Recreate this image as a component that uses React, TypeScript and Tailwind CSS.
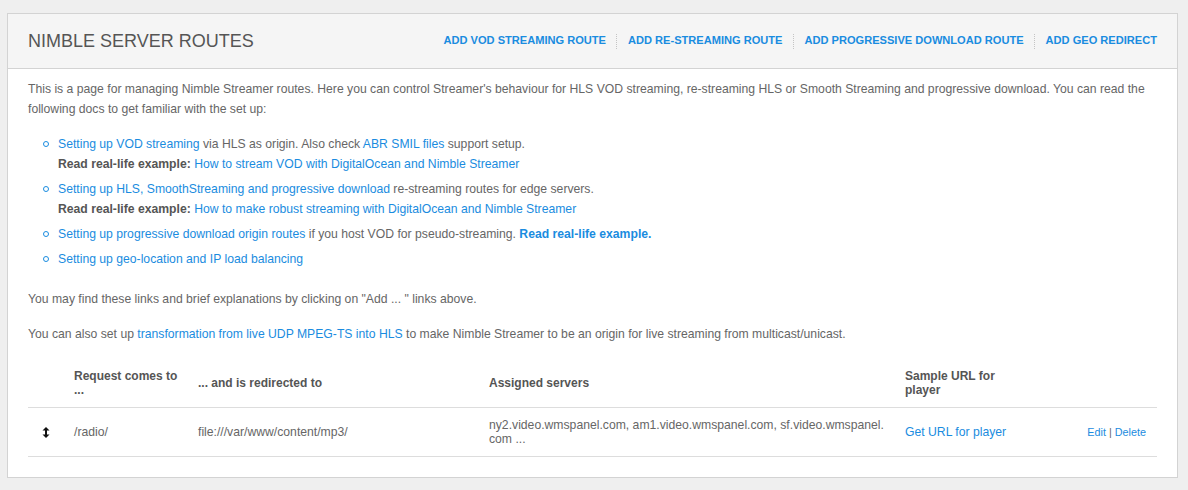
import React from "react";

const font = { fontFamily: '"Liberation Sans", Arial, sans-serif' };

function A({ children, bold = false }: { children: React.ReactNode; bold?: boolean }) {
  return (
    <a href="#" className={"text-[#1a8ce0] no-underline" + (bold ? " font-bold" : "")}>
      {children}
    </a>
  );
}

function Bullet({ children }: { children: React.ReactNode }) {
  return (
    <li className="flex">
      <span className="w-[30px] shrink-0 flex pl-[15px] pt-[7px]">
        <span className="block w-[6px] h-[6px] rounded-full border-[1.5px] border-[#1a8ce0]" />
      </span>
      <div>{children}</div>
    </li>
  );
}

function MoveIcon() {
  return (
    <svg width="8" height="11" viewBox="0 0 8 11" className="block">
      <polygon points="4,0 7.5,3.5 0.5,3.5" fill="#111" />
      <rect x="3" y="3" width="2" height="5" fill="#111" />
      <polygon points="4,11 7.5,7.5 0.5,7.5" fill="#111" />
    </svg>
  );
}

const headerLinks = [
  "ADD VOD STREAMING ROUTE",
  "ADD RE-STREAMING ROUTE",
  "ADD PROGRESSIVE DOWNLOAD ROUTE",
  "ADD GEO REDIRECT",
];

export default function App() {
  return (
    <div className="min-h-[490px] bg-[#efefef] pt-[13px] pl-[7px]" style={font}>
      <div className="w-[1171px] border border-[#d3d3d3] bg-white">
        {/* panel heading */}
        <div className="h-[55px] bg-[#f5f5f5] border-b border-[#d3d3d3] flex items-center justify-between pl-5 pr-5">
          <h1 className="text-[18px] text-[#555] font-normal leading-none">NIMBLE SERVER ROUTES</h1>
          <div className="flex items-center">
            {headerLinks.map((l, i) => (
              <React.Fragment key={l}>
                {i > 0 && <span className="h-[15px] border-l border-dotted border-[#c4c4c4] mx-[10.5px]" />}
                <a href="#" className="text-[11.08px] font-bold text-[#1a8ce0] leading-none">
                  {l}
                </a>
              </React.Fragment>
            ))}
          </div>
        </div>

        {/* panel body */}
        <div className="px-5 pt-[10px] pb-5 text-[12.2px] leading-[20px] text-[#666]">
          <p>
            This is a page for managing Nimble Streamer routes. Here you can control Streamer's behaviour for HLS VOD
            streaming, re-streaming HLS or Smooth Streaming and progressive download. You can read the following docs to
            get familiar with the set up:
          </p>

          <ul className="mt-[15px] flex flex-col gap-[5px]">
            <Bullet>
              <div>
                <A>Setting up VOD streaming</A> via HLS as origin. Also check <A>ABR SMIL files</A> support setup.
              </div>
              <div>
                <b className="text-[#555]">Read real-life example:</b>{" "}
                <A>How to stream VOD with DigitalOcean and Nimble Streamer</A>
              </div>
            </Bullet>
            <Bullet>
              <div>
                <A>Setting up HLS, SmoothStreaming and progressive download</A> re-streaming routes for edge servers.
              </div>
              <div>
                <b className="text-[#555]">Read real-life example:</b>{" "}
                <A>How to make robust streaming with DigitalOcean and Nimble Streamer</A>
              </div>
            </Bullet>
            <Bullet>
              <A>Setting up progressive download origin routes</A> if you host VOD for pseudo-streaming.{" "}
              <A bold>Read real-life example.</A>
            </Bullet>
            <Bullet>
              <A>Setting up geo-location and IP load balancing</A>
            </Bullet>
          </ul>

          <p className="mt-5">You may find these links and brief explanations by clicking on "Add ... " links above.</p>
          <p className="mt-[15px]">
            You can also set up <A>transformation from live UDP MPEG-TS into HLS</A> to make Nimble Streamer to be an
            origin for live streaming from multicast/unicast.
          </p>

          {/* routes table */}
          <div className="mt-[15px] text-[12px] leading-[14px]">
            <div className="grid grid-cols-[38px_124px_291px_416px_130px_129px] border-b border-[#ddd] font-bold text-[#555] items-center">
              <div />
              <div className="px-2 py-[10px]">Request comes to ...</div>
              <div className="px-2 py-[10px]">... and is redirected to</div>
              <div className="px-2 py-[10px]">Assigned servers</div>
              <div className="px-2 py-[10px]">Sample URL for player</div>
              <div />
            </div>
            <div className="grid grid-cols-[38px_124px_291px_416px_130px_129px] border-b border-[#ddd] items-center text-[#666] text-[12.2px]">
              <div className="pl-[14px] py-[10px]">
                <MoveIcon />
              </div>
              <div className="px-2 py-[10px]">/radio/</div>
              <div className="px-2 py-[10px]">file:///var/www/content/mp3/</div>
              <div className="px-2 py-[10px]">
                ny2.video.wmspanel.com, am1.video.wmspanel.com, sf.video.wmspanel.
                <br />
                com ...
              </div>
              <div className="px-2 py-[10px]">
                <A>Get URL for player</A>
              </div>
              <div className="pr-[10px] py-[10px] text-right text-[10.8px]">
                <A>Edit</A> <span className="text-[#666]">|</span> <A>Delete</A>
              </div>
            </div>
          </div>
        </div>
      </div>
    </div>
  );
}
